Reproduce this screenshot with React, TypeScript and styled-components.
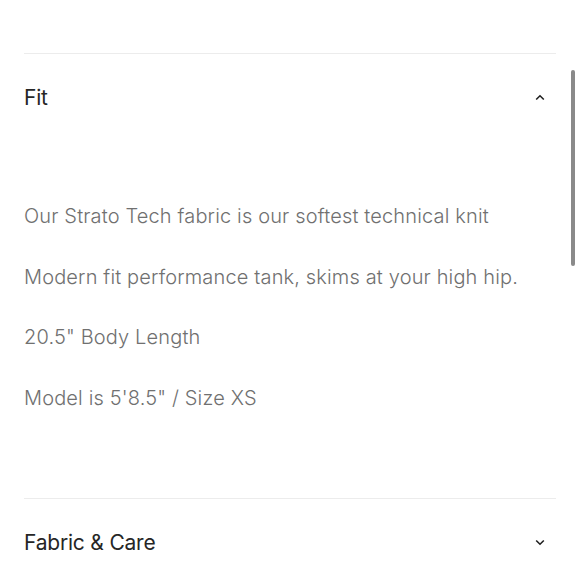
import React from "react";
import styled, { createGlobalStyle } from "styled-components";

const Global = createGlobalStyle`
  html, body { margin: 0; padding: 0; background: #ffffff; }
  body { font-family: Inter, "Noto Sans", "Liberation Sans", sans-serif; -webkit-font-smoothing: antialiased; }
  * { box-sizing: border-box; }
`;

const Page = styled.div`
  padding: 53px 24px 0 24px;
  width: 580px;
  height: 580px;
  overflow: hidden;
`;

const Item = styled.section`
  border-top: 1px solid #ececec;
`;

const Header = styled.div`
  display: flex;
  align-items: center;
  justify-content: space-between;
  height: 86px;
  padding-right: 11px;
`;

const Title = styled.h3`
  margin: 0;
  font-size: 21px;
  font-weight: 400;
  color: #262626;
  letter-spacing: -0.2px;
`;

const Chevron = styled.svg`
  display: block;
  width: 10px;
  height: 7px;
`;

const Content = styled.div`
  padding: 61px 0 85.5px 0;
  display: flex;
  flex-direction: column;
  gap: 30.5px;
`;

const Para = styled.p`
  margin: 0;
  font-size: 20px;
  line-height: 30px;
  font-weight: 300;
  color: #707070;
  letter-spacing: 0.15px;
`;

const Scrollbar = styled.div`
  position: fixed;
  right: 5px;
  top: 70px;
  width: 4px;
  height: 196px;
  border-radius: 2px;
  background: #8a8a8a;
`;

const Up = () => (
  <Chevron viewBox="0 0 10 7" fill="none">
    <polyline points="1.2,5.5 5,1.8 8.8,5.5" stroke="#1f1f1f" strokeWidth="1.6" />
  </Chevron>
);

const Down = () => (
  <Chevron viewBox="0 0 10 7" fill="none">
    <polyline points="1.2,1.5 5,5.2 8.8,1.5" stroke="#1f1f1f" strokeWidth="1.6" />
  </Chevron>
);

const lines = [
  "Our Strato Tech fabric is our softest technical knit",
  "Modern fit performance tank, skims at your high hip.",
  '20.5" Body Length',
  "Model is 5'8.5\" / Size XS",
];

export default function App() {
  return (
    <>
      <Global />
      <Page>
        <Item>
          <Header>
            <Title>Fit</Title>
            <Up />
          </Header>
          <Content>
            {lines.map((l) => (
              <Para key={l}>{l}</Para>
            ))}
          </Content>
        </Item>
        <Item>
          <Header>
            <Title>Fabric &amp; Care</Title>
            <Down />
          </Header>
        </Item>
      </Page>
      <Scrollbar />
    </>
  );
}
